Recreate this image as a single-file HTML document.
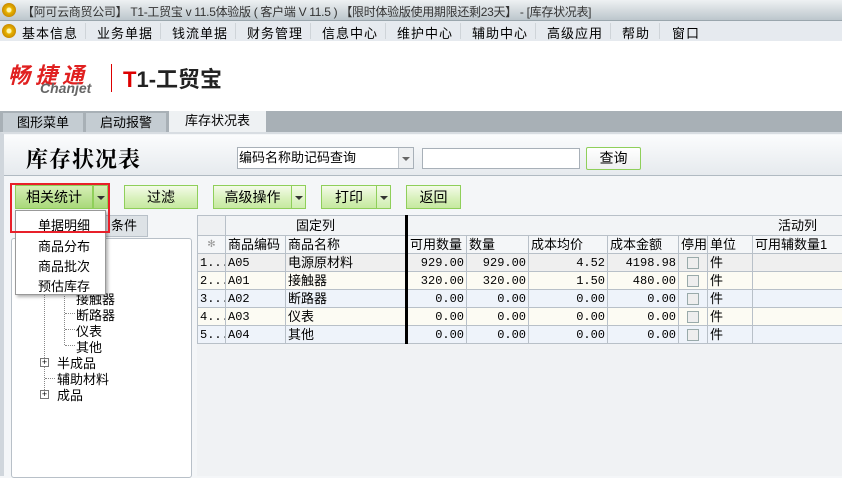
<!DOCTYPE html><html><head><meta charset="utf-8"><style>
*{box-sizing:border-box;margin:0;padding:0}
body{width:842px;height:476px;overflow:hidden;background:#f4f6f8;font-family:"Liberation Sans","Noto Sans CJK SC",sans-serif;font-size:13px;color:#000;position:relative}
.a{position:absolute}
.coin{position:absolute;width:14px;height:14px;border-radius:50%;background:radial-gradient(circle,#fff6b0 0 2px,#e8b400 3px,#c98a00 7px)}
.btn{position:absolute;top:185px;height:24px;border:1px solid #8fcf5a;background:linear-gradient(#f4fbe9,#d6f0b8 60%,#c6e9a0);text-align:center;line-height:22px;font-size:14px}
.dd{position:absolute;top:185px;height:24px;width:15px;border:1px solid #8fcf5a;background:linear-gradient(#f4fbe9,#cfeeb0)}
.dd:after{content:"";position:absolute;left:3px;top:10px;border:4px solid transparent;border-top:4px solid #333}
table{border-collapse:collapse;table-layout:fixed}
td{border:1px solid #b8c0c8;height:18px;line-height:16px;padding:0 2px;white-space:nowrap;overflow:hidden;font-size:13px}
.n{text-align:right;font-family:"Liberation Mono",monospace;font-size:12px}
.m{font-family:"Liberation Mono",monospace;font-size:12px}
.cb{display:inline-block;width:12px;height:12px;border:1px solid #9aa;background:#eee;vertical-align:middle}
.mi{position:absolute;top:23px;font-size:13px;letter-spacing:1px}
.sp{position:absolute;top:23px;width:1px;height:16px;background:#cfd4d9}
</style></head><body>
<div class="a" style="left:0;top:0;width:842px;height:21px;background:linear-gradient(#eef1f3,#bcc6cc);border-bottom:1px solid #9aa6ad"></div>
<div class="coin" style="left:2px;top:3px"></div>
<div class="a" style="left:22px;top:3px;font-size:12px;color:#333;white-space:nowrap;letter-spacing:-0.3px">【阿可云商贸公司】 T1-工贸宝 v 11.5体验版 ( 客户端 V 11.5 ) 【限时体验版使用期限还剩23天】 - [库存状况表]</div>
<div class="a" style="left:0;top:21px;width:842px;height:20px;background:#e6eaef"></div>
<div class="coin" style="left:2px;top:24px"></div>
<div class="mi" style="left:22px">基本信息</div><div class="sp" style="left:85px"></div>
<div class="mi" style="left:97px">业务单据</div><div class="sp" style="left:160px"></div>
<div class="mi" style="left:172px">钱流单据</div><div class="sp" style="left:235px"></div>
<div class="mi" style="left:247px">财务管理</div><div class="sp" style="left:310px"></div>
<div class="mi" style="left:322px">信息中心</div><div class="sp" style="left:385px"></div>
<div class="mi" style="left:397px">维护中心</div><div class="sp" style="left:460px"></div>
<div class="mi" style="left:472px">辅助中心</div><div class="sp" style="left:535px"></div>
<div class="mi" style="left:547px">高级应用</div><div class="sp" style="left:610px"></div>
<div class="mi" style="left:622px">帮助</div><div class="sp" style="left:659px"></div>
<div class="mi" style="left:672px">窗口</div>
<div class="a" style="left:0;top:41px;width:842px;height:70px;background:#fff"></div>
<div class="a" style="left:8px;top:58px;font-size:22px;font-weight:bold;font-style:italic;color:#e02020;letter-spacing:5px">畅捷通</div>
<div class="a" style="left:40px;top:80px;font-size:14px;font-style:italic;font-weight:bold;color:#666">Chanjet</div>
<div class="a" style="left:111px;top:64px;width:1px;height:28px;background:#d00"></div>
<div class="a" style="left:123px;top:62px;font-size:22px;font-weight:bold;color:#222"><span style="color:#d00">T</span>1-工贸宝</div>
<div class="a" style="left:0;top:111px;width:842px;height:21px;background:#a8b0b6"></div>
<div class="a" style="left:3px;top:113px;width:80px;height:19px;background:#c4ccd2;text-align:center;line-height:19px">图形菜单</div>
<div class="a" style="left:86px;top:113px;width:80px;height:19px;background:#c4ccd2;text-align:center;line-height:19px">启动报警</div>
<div class="a" style="left:169px;top:111px;width:97px;height:21px;background:#eef1f3;text-align:center;line-height:19px">库存状况表</div>
<div class="a" style="left:0;top:132px;width:842px;height:344px;background:#f4f6f8;border-top:2px solid #d8dde2;border-left:4px solid #d0d6dc"></div>
<div class="a" style="left:4px;top:135px;width:838px;height:41px;background:linear-gradient(#fbfcfd,#e6eaee);border-bottom:1px solid #b0bac2"></div>
<div class="a" style="left:26px;top:143px;font-size:22px;font-weight:bold;font-family:'Liberation Serif','Noto Serif CJK SC',serif;letter-spacing:1px">库存状况表</div>
<div class="a" style="left:237px;top:147px;width:177px;height:22px;background:#fff;border:1px solid #a8b0b8;font-size:13px;line-height:20px;padding-left:1px">编码名称助记码查询</div>
<div class="a" style="left:398px;top:148px;width:15px;height:20px;background:#eef0f2;border-left:1px solid #c0c6cc"></div>
<div class="a" style="left:402px;top:157px;border:4px solid transparent;border-top:4px solid #666"></div>
<div class="a" style="left:422px;top:148px;width:158px;height:21px;background:#fff;border:1px solid #a8b0b8"></div>
<div class="a" style="left:586px;top:147px;width:55px;height:23px;border:1px solid #8fcf5a;border-radius:2px;background:linear-gradient(#fff,#eef0f0);text-align:center;line-height:21px;font-size:14px">查询</div>
<div class="btn" style="left:15px;width:78px;background:linear-gradient(#d6efb6,#a9d97a)">相关统计</div><div class="dd" style="left:93px;background:linear-gradient(#d6efb6,#a9d97a)"></div>
<div class="btn" style="left:124px;width:74px">过滤</div>
<div class="btn" style="left:213px;width:79px">高级操作</div><div class="dd" style="left:291px"></div>
<div class="btn" style="left:321px;width:56px">打印</div><div class="dd" style="left:376px"></div>
<div class="btn" style="left:406px;width:55px">返回</div>
<div class="a" style="left:105px;top:215px;width:43px;height:22px;background:#dde2e6;border:1px solid #b8c0c8;padding-left:5px;line-height:20px">条件</div>
<div class="a" style="left:11px;top:238px;width:181px;height:240px;background:#fff;border:1px solid #b8c0c8;border-radius:3px"></div>
<div class="a" style="left:44px;top:262px;width:1px;height:132px;border-left:1px dotted #888"></div>
<div class="a" style="left:64px;top:285px;width:1px;height:60px;border-left:1px dotted #888"></div>
<div class="a" style="left:57px;top:272px;font-size:13px">原材料</div>
<div class="a" style="left:76px;top:289px;font-size:13px">接触器</div>
<div class="a" style="left:65px;top:313px;width:10px;border-top:1px dotted #888"></div><div class="a" style="left:76px;top:305px">断路器</div>
<div class="a" style="left:65px;top:329px;width:10px;border-top:1px dotted #888"></div><div class="a" style="left:76px;top:321px">仪表</div>
<div class="a" style="left:65px;top:345px;width:10px;border-top:1px dotted #888"></div><div class="a" style="left:76px;top:337px">其他</div>
<div class="a" style="left:40px;top:358px;width:9px;height:9px;border:1px solid #777;background:#fff;font-size:9px;line-height:7px;text-align:center">+</div><div class="a" style="left:57px;top:353px">半成品</div>
<div class="a" style="left:45px;top:378px;width:10px;border-top:1px dotted #888"></div><div class="a" style="left:57px;top:369px">辅助材料</div>
<div class="a" style="left:40px;top:390px;width:9px;height:9px;border:1px solid #777;background:#fff;font-size:9px;line-height:7px;text-align:center">+</div><div class="a" style="left:57px;top:385px">成品</div>
<div class="a" style="left:15px;top:210px;width:91px;height:85px;background:#fff;border:1px solid #999;box-shadow:2px 2px 3px rgba(0,0,0,.3)"></div>
<div class="a" style="left:38px;top:215px">单据明细</div>
<div class="a" style="left:38px;top:236px">商品分布</div>
<div class="a" style="left:38px;top:256px">商品批次</div>
<div class="a" style="left:38px;top:276px">预估库存</div>
<div class="a" style="left:10px;top:183px;width:100px;height:50px;border:2px solid #e8202a"></div>
<div class="a" style="left:197px;top:215px;width:645px;height:261px;background:#f0f2f4"></div>
<table class="a" style="left:197px;top:215px;width:660px;background:#fff">
<colgroup><col style="width:28px"><col style="width:60px"><col style="width:121px"><col style="width:60px"><col style="width:62px"><col style="width:79px"><col style="width:71px"><col style="width:29px"><col style="width:45px"><col style="width:105px"></colgroup>
<tr style="background:#f2f4f6"><td style="height:20px;background:#eef0f2"></td><td colspan="2" style="text-align:center">固定列</td><td colspan="7" style="border-left:3px solid #000;text-align:right;padding-right:40px">活动列</td></tr>
<tr style="background:#f4f6f8"><td style="text-align:center;color:#999;font-size:10px">✻</td><td>商品编码</td><td>商品名称</td><td style="border-left:3px solid #000">可用数量</td><td>数量</td><td>成本均价</td><td>成本金额</td><td>停用</td><td>单位</td><td>可用辅数量1</td></tr>
<tr style="background:#efefef"><td class="m">1...</td><td class="m">A05</td><td>电源原材料</td><td class="n" style="border-left:3px solid #000">929.00</td><td class="n">929.00</td><td class="n">4.52</td><td class="n">4198.98</td><td style="text-align:center"><span class="cb"></span></td><td>件</td><td></td></tr>
<tr style="background:#fcfbf3"><td class="m">2...</td><td class="m">A01</td><td>接触器</td><td class="n" style="border-left:3px solid #000">320.00</td><td class="n">320.00</td><td class="n">1.50</td><td class="n">480.00</td><td style="text-align:center"><span class="cb"></span></td><td>件</td><td></td></tr>
<tr style="background:#eef3fa"><td class="m">3...</td><td class="m">A02</td><td>断路器</td><td class="n" style="border-left:3px solid #000">0.00</td><td class="n">0.00</td><td class="n">0.00</td><td class="n">0.00</td><td style="text-align:center"><span class="cb"></span></td><td>件</td><td></td></tr>
<tr style="background:#fcfbf3"><td class="m">4...</td><td class="m">A03</td><td>仪表</td><td class="n" style="border-left:3px solid #000">0.00</td><td class="n">0.00</td><td class="n">0.00</td><td class="n">0.00</td><td style="text-align:center"><span class="cb"></span></td><td>件</td><td></td></tr>
<tr style="background:#eef3fa"><td class="m">5...</td><td class="m">A04</td><td>其他</td><td class="n" style="border-left:3px solid #000">0.00</td><td class="n">0.00</td><td class="n">0.00</td><td class="n">0.00</td><td style="text-align:center"><span class="cb"></span></td><td>件</td><td></td></tr>
</table>
</body></html>
